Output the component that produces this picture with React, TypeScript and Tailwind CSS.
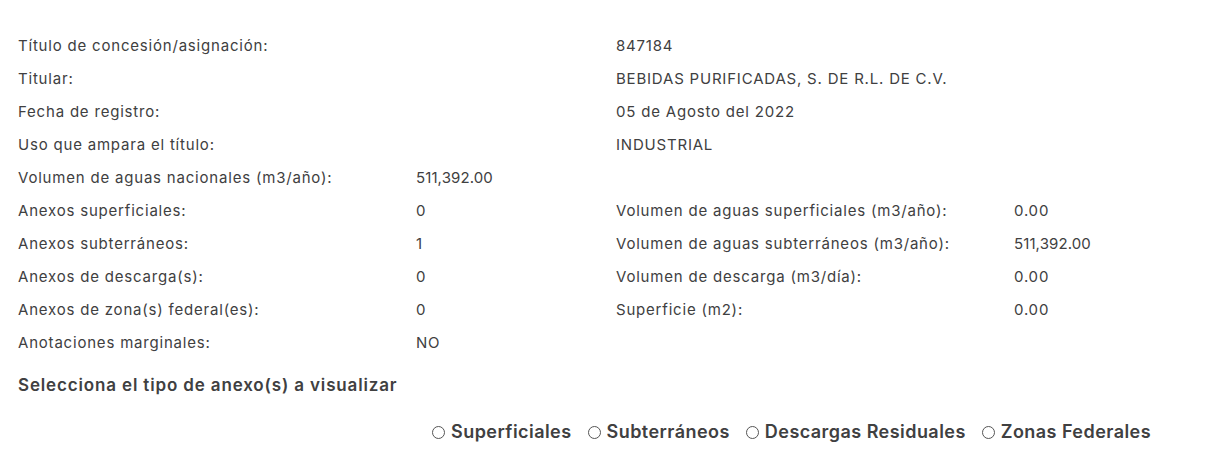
export default function App() {
  const top = [
    ['Título de concesión/asignación:', '847184'],
    ['Titular:', 'BEBIDAS PURIFICADAS, S. DE R.L. DE C.V.'],
    ['Fecha de registro:', '05 de Agosto del 2022'],
    ['Uso que ampara el título:', 'INDUSTRIAL'],
  ]
  const rows = [
    ['Volumen de aguas nacionales (m3/año):', '511,392.00', '', ''],
    ['Anexos superficiales:', '0', 'Volumen de aguas superficiales (m3/año):', '0.00'],
    ['Anexos subterráneos:', '1', 'Volumen de aguas subterráneos (m3/año):', '511,392.00'],
    ['Anexos de descarga(s):', '0', 'Volumen de descarga (m3/día):', '0.00'],
    ['Anexos de zona(s) federal(es):', '0', 'Superficie (m2):', '0.00'],
    ['Anotaciones marginales:', 'NO', '', ''],
  ]
  const options = ['Superficiales', 'Subterráneos', 'Descargas Residuales', 'Zonas Federales']

  // long numbers are narrower in the original font
  const num = (v: string) => (v.includes(',') ? 'h-[33px] tracking-[0.1px]' : 'h-[33px]')

  return (
    <div className="min-h-screen bg-white text-[#404041] pl-[18px] pt-[34px]" style={{ fontFamily: 'Inter, "Noto Sans", sans-serif' }}>
      <div className="grid grid-cols-[398px_200px_398px_1fr] text-[15px] leading-[24px] tracking-[0.8px]">
        {top.map(([label, value]) => (
          <div key={label} className="contents">
            <div className="col-span-2 h-[33px]">{label}</div>
            <div className="col-span-2 h-[33px]">{value}</div>
          </div>
        ))}
        {rows.map(([a, b, c, d]) => (
          <div key={a} className="contents">
            <div className="h-[33px]">{a}</div>
            <div className={num(b)}>{b}</div>
            <div className="h-[33px]">{c}</div>
            <div className={num(d)}>{d}</div>
          </div>
        ))}
      </div>

      <h3 className="mt-[9px] text-[17px] font-semibold leading-[24px] tracking-[0.85px]">Selecciona el tipo de anexo(s) a visualizar</h3>

      <div className="mt-[23px] flex items-center pl-[414px] text-[18px] font-semibold leading-[24px] tracking-[0.45px]">
        {options.map((opt) => (
          <label key={opt} className="mr-[16px] flex items-center gap-[6px]">
            <span className="inline-block h-[13px] w-[13px] rounded-full border border-[#555]" />
            {opt}
          </label>
        ))}
      </div>
    </div>
  )
}
